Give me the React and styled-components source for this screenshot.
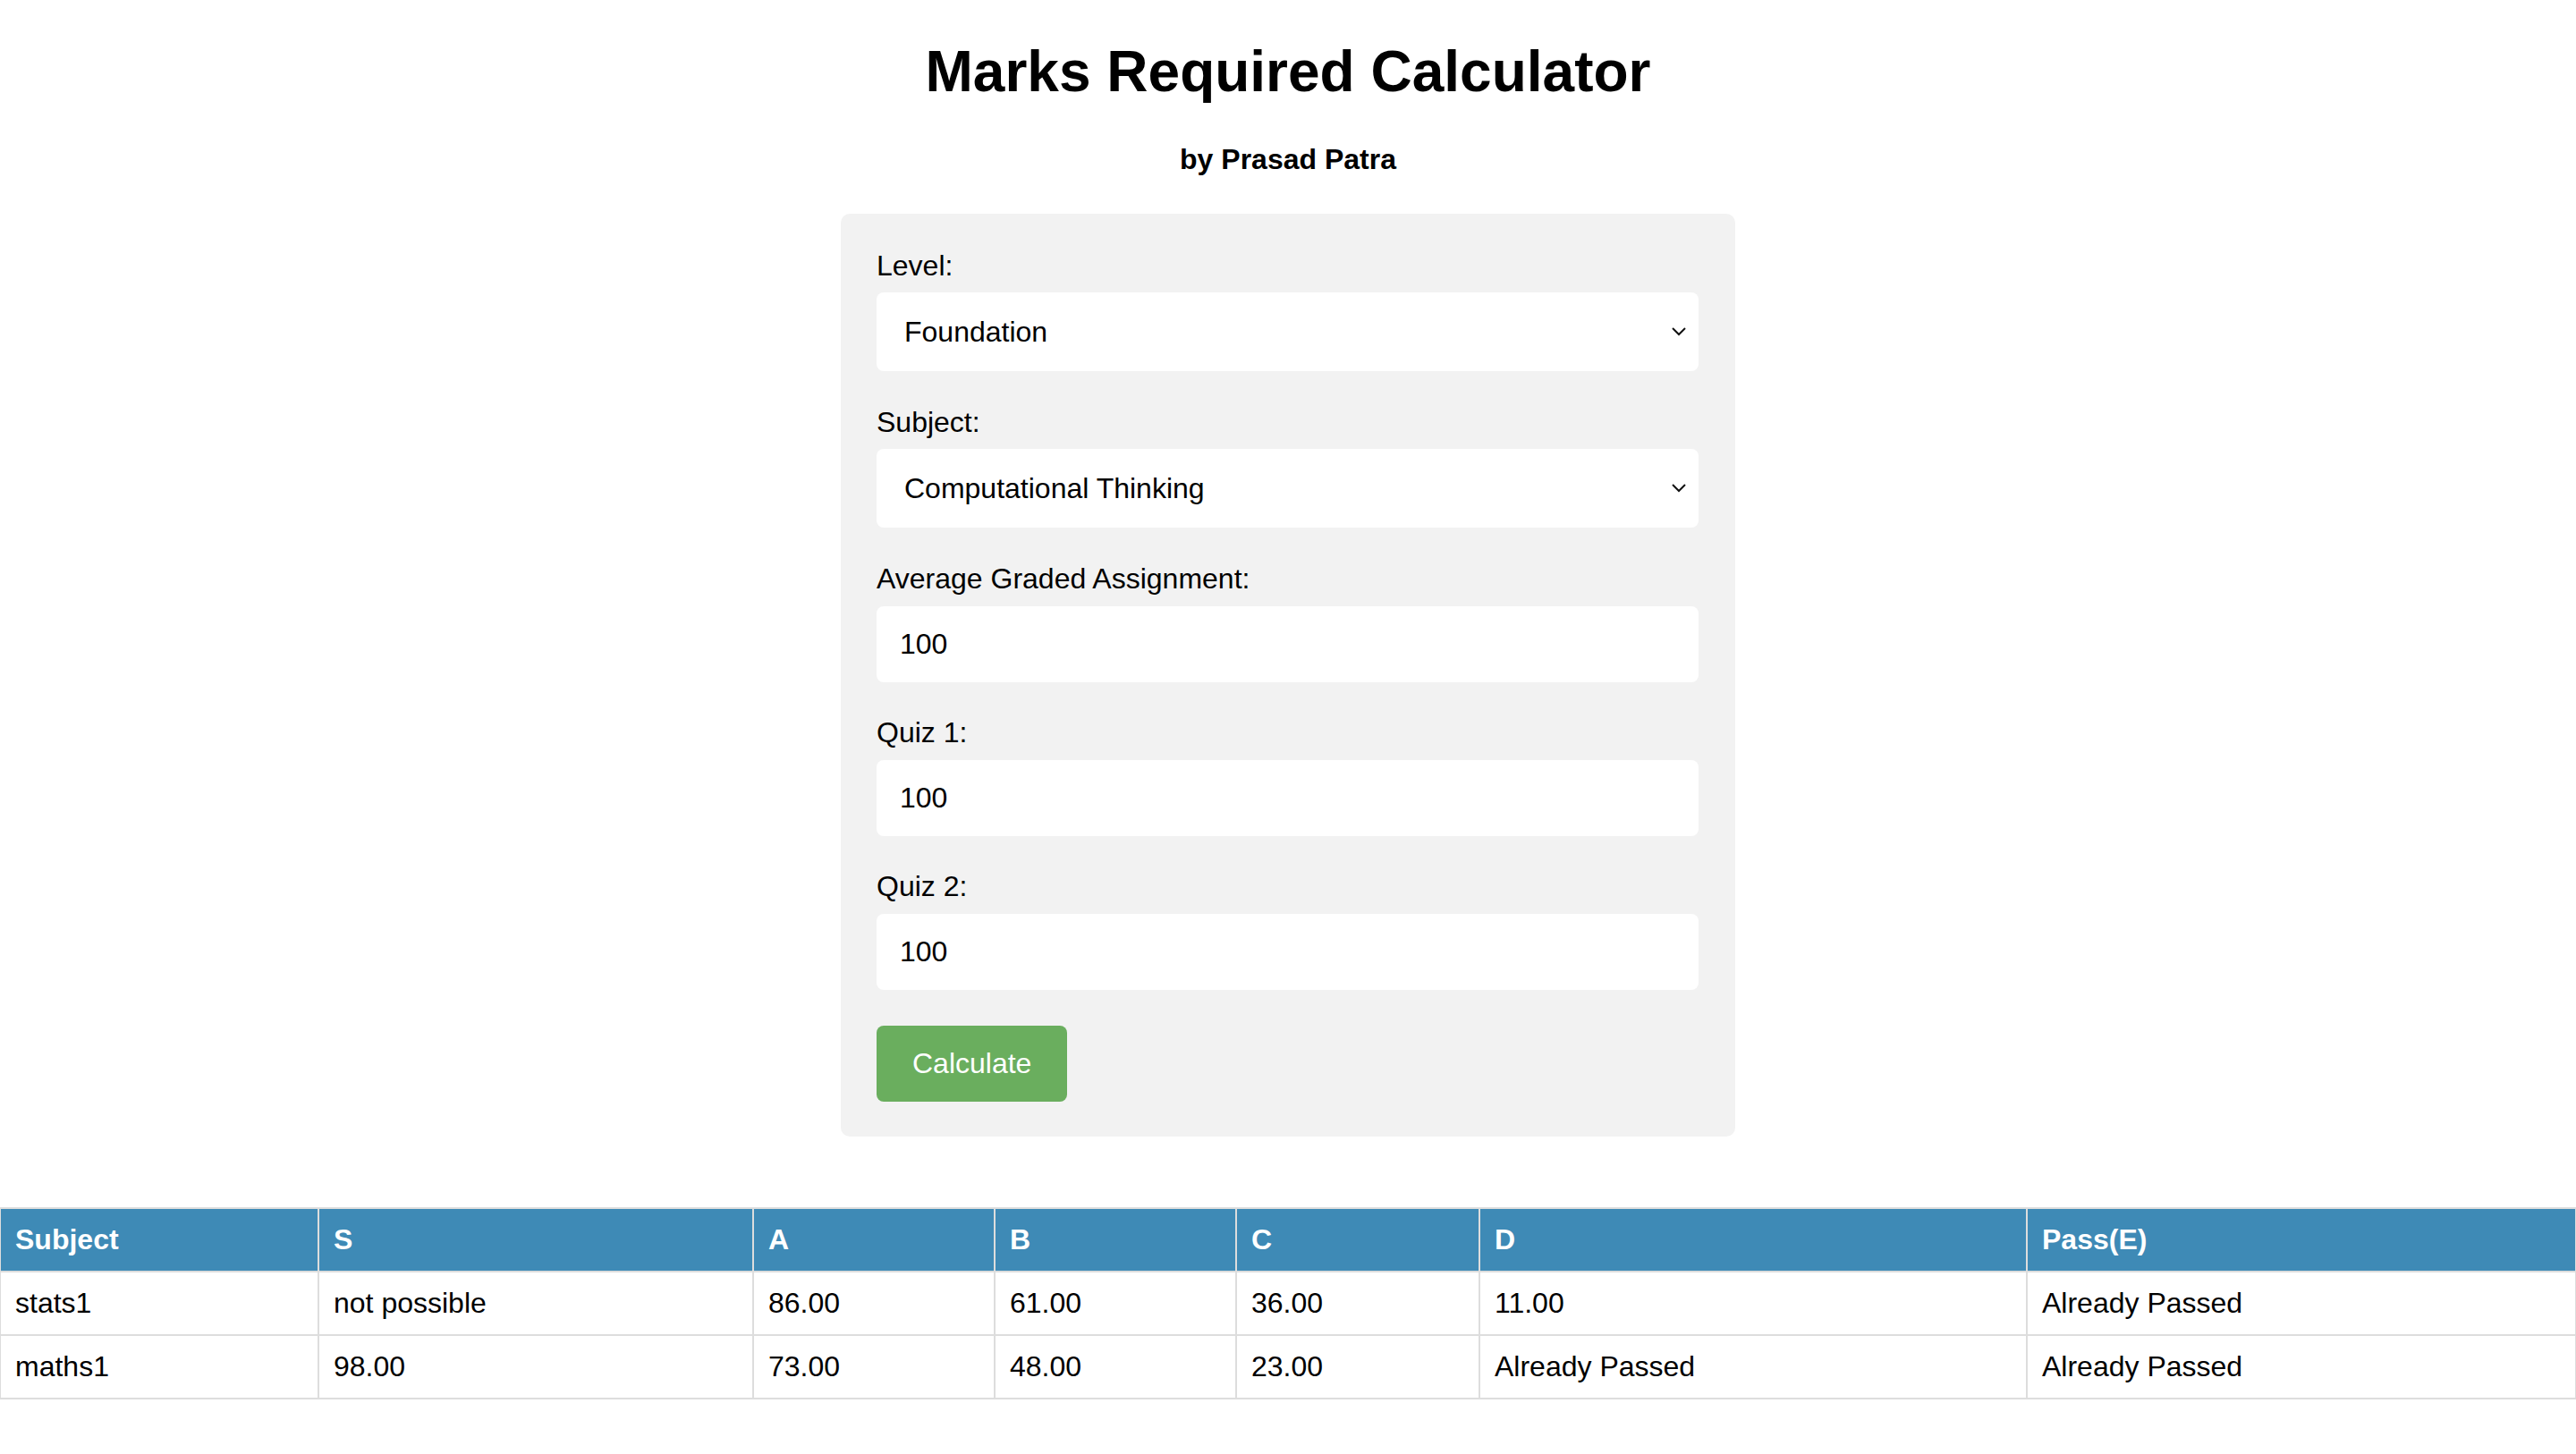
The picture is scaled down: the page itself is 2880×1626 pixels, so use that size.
import React, { useState } from 'react';
import styled, { createGlobalStyle } from 'styled-components';

const GlobalStyle = createGlobalStyle`
  body {
    margin: 0;
    font-family: "Liberation Sans", Arial, Helvetica, sans-serif;
    color: #000;
    background: #fff;
  }
`;

const Page = styled.div`
  display: flex;
  flex-direction: column;
  align-items: center;
`;

const Title = styled.h1`
  margin: 43px 0;
  font-size: 64px;
  font-weight: 700;
`;

const Byline = styled.h4`
  margin: 0 0 42px;
  font-size: 32px;
  font-weight: 700;
`;

const Form = styled.form`
  box-sizing: border-box;
  width: 1000px;
  padding: 40px 41px 39px 40px;
  background: #f2f2f2;
  border-radius: 10px;
  display: flex;
  flex-direction: column;
  align-items: flex-start;
`;

const Field = styled.div`
  width: 100%;
  margin-bottom: ${p => (p.$last ? '40px' : p.$select ? '39px' : '38px')};
`;

const Label = styled.label`
  display: block;
  font-size: 32px;
  line-height: 37px;
  margin-bottom: ${p => (p.$select ? '11px' : '12px')};
`;

const SelectWrap = styled.div`
  position: relative;
  width: 100%;
`;

const Select = styled.select`
  appearance: none;
  box-sizing: border-box;
  width: 100%;
  height: 88px;
  padding: 0 60px 0 31px;
  border: none;
  border-radius: 8px;
  background: #fff;
  color: #000;
  font-family: inherit;
  font-size: 32px;
  outline: none;
`;

const Chevron = styled.svg`
  position: absolute;
  right: 7px;
  top: 50%;
  transform: translateY(-50%);
  pointer-events: none;
`;

const Input = styled.input`
  box-sizing: border-box;
  width: 100%;
  height: 85px;
  padding: 0 26px;
  border: none;
  border-radius: 8px;
  background: #fff;
  color: #000;
  font-family: inherit;
  font-size: 32px;
  outline: none;
`;

const Button = styled.button`
  height: 85px;
  padding: 0 40px;
  border: none;
  border-radius: 8px;
  background: #6aae5e;
  color: #fff;
  font-family: inherit;
  font-size: 32px;
  cursor: pointer;
`;

const Table = styled.table`
  width: 100%;
  margin-top: 79px;
  border-collapse: collapse;
  table-layout: fixed;
  font-size: 32px;
`;

const Col = styled.col`
  width: ${p => p.$w}px;
`;

const Th = styled.th`
  background: #3e8ab6;
  color: #fff;
  text-align: left;
  font-weight: 700;
  padding: 16px;
  line-height: 37px;
  border: 2px solid #dddddd;
`;

const Td = styled.td`
  padding: 16px;
  line-height: 37px;
  border: 2px solid #dddddd;
`;

const widths = [356, 486, 270, 270, 272, 612, 614];
const heads = ['Subject', 'S', 'A', 'B', 'C', 'D', 'Pass(E)'];
const rows = [
  ['stats1', 'not possible', '86.00', '61.00', '36.00', '11.00', 'Already Passed'],
  ['maths1', '98.00', '73.00', '48.00', '23.00', 'Already Passed', 'Already Passed'],
];

function ArrowDown() {
  return (
    <Chevron width="30" height="12" viewBox="0 0 30 12">
      <path d="M8 2 L15 9 L22 2" fill="none" stroke="#111" strokeWidth="2" />
    </Chevron>
  );
}

export default function App() {
  const [level, setLevel] = useState('Foundation');
  const [subject, setSubject] = useState('Computational Thinking');
  const [ga, setGa] = useState('100');
  const [q1, setQ1] = useState('100');
  const [q2, setQ2] = useState('100');

  return (
    <Page>
      <GlobalStyle />
      <Title>Marks Required Calculator</Title>
      <Byline>by Prasad Patra</Byline>

      <Form onSubmit={e => e.preventDefault()}>
        <Field $select>
          <Label $select>Level:</Label>
          <SelectWrap>
            <Select value={level} onChange={e => setLevel(e.target.value)}>
              <option>Foundation</option>
              <option>Diploma</option>
            </Select>
            <ArrowDown />
          </SelectWrap>
        </Field>

        <Field $select>
          <Label $select>Subject:</Label>
          <SelectWrap>
            <Select value={subject} onChange={e => setSubject(e.target.value)}>
              <option>Computational Thinking</option>
              <option>Statistics 1</option>
              <option>Mathematics 1</option>
            </Select>
            <ArrowDown />
          </SelectWrap>
        </Field>

        <Field>
          <Label>Average Graded Assignment:</Label>
          <Input type="text" value={ga} onChange={e => setGa(e.target.value)} />
        </Field>

        <Field>
          <Label>Quiz 1:</Label>
          <Input type="text" value={q1} onChange={e => setQ1(e.target.value)} />
        </Field>

        <Field $last>
          <Label>Quiz 2:</Label>
          <Input type="text" value={q2} onChange={e => setQ2(e.target.value)} />
        </Field>

        <Button type="button">Calculate</Button>
      </Form>

      <Table>
        <colgroup>
          {widths.map((w, i) => <Col key={i} $w={w} />)}
        </colgroup>
        <thead>
          <tr>
            {heads.map(h => <Th key={h}>{h}</Th>)}
          </tr>
        </thead>
        <tbody>
          {rows.map(r => (
            <tr key={r[0]}>
              {r.map((c, i) => <Td key={i}>{c}</Td>)}
            </tr>
          ))}
        </tbody>
      </Table>
    </Page>
  );
}
